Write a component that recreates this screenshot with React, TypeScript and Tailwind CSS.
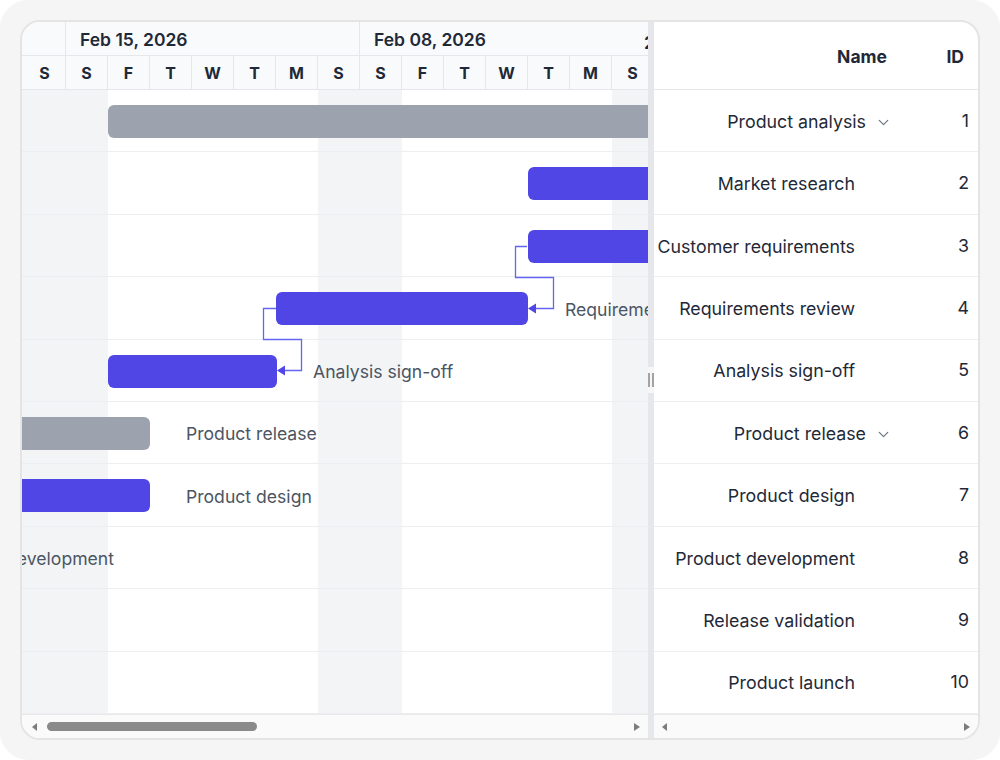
import React from 'react';
import { ChevronDown } from 'lucide-react';

const DAYS = ['S', 'S', 'F', 'T', 'W', 'T', 'M', 'S', 'S', 'F', 'T', 'W', 'T', 'M', 'S'];
const WEEKEND = [0, 1, 7, 8, 14];

const ROWS = [
  { id: 1, name: 'Product analysis', parent: true },
  { id: 2, name: 'Market research' },
  { id: 3, name: 'Customer requirements' },
  { id: 4, name: 'Requirements review' },
  { id: 5, name: 'Analysis sign-off' },
  { id: 6, name: 'Product release', parent: true },
  { id: 7, name: 'Product design' },
  { id: 8, name: 'Product development' },
  { id: 9, name: 'Release validation' },
  { id: 10, name: 'Product launch' },
];

type Bar = { left: number; width: number; summary?: boolean; label?: string; labelLeft?: number; labelRight?: number };

const BARS: (Bar | null)[] = [
  { left: 86, width: 600, summary: true },
  { left: 506, width: 200 },
  { left: 506, width: 200 },
  { left: 254, width: 252, label: 'Requirements review', labelLeft: 543 },
  { left: 86, width: 169, label: 'Analysis sign-off', labelLeft: 291 },
  { left: -30, width: 158, summary: true, label: 'Product release', labelLeft: 164 },
  { left: -30, width: 158, label: 'Product design', labelLeft: 164 },
  { left: 0, width: 0, label: 'Product development', labelRight: 534 },
  null,
  null,
];

function DayCols({ header }: { header?: boolean }) {
  return (
    <>
      {DAYS.map((d, i) => (
        <div
          key={i}
          className={
            (i === 0 ? 'w-[44px] ' : 'w-[42px] ') +
            'shrink-0 ' +
            (header
              ? 'flex items-center justify-center border-r border-[#e5e7eb] bg-[#f9fafb] text-[16px] font-bold text-[#1f2937]'
              : WEEKEND.includes(i)
              ? 'h-full bg-[#f3f4f6]'
              : 'h-full bg-white')
          }
        >
          {header ? <span className={i === 0 ? 'pl-[2px]' : ''}>{d}</span> : null}
        </div>
      ))}
    </>
  );
}

function ArrowLeft() {
  return (
    <svg width="6" height="8" viewBox="0 0 6 8">
      <path d="M5 0 L5 8 L0 4 Z" fill="#7c7c7c" />
    </svg>
  );
}
function ArrowRight() {
  return (
    <svg width="6" height="8" viewBox="0 0 6 8">
      <path d="M0 0 L0 8 L6 4 Z" fill="#7c7c7c" />
    </svg>
  );
}

export default function App() {
  return (
    <div className="w-[1000px] h-[760px] bg-white font-['Inter',sans-serif]">
      <div className="w-full h-full rounded-[28px] bg-[#f5f5f5] p-[20px]">
        <div className="w-[960px] h-[720px] rounded-[20px] border-2 border-[#e4e4e4] bg-white overflow-hidden flex">
          {/* Chart panel */}
          <div className="w-[626px] shrink-0 flex flex-col overflow-hidden">
            {/* header */}
            <div className="h-[68px] shrink-0 flex flex-col overflow-hidden relative">
              <div className="h-[34px] flex border-b border-[#e5e7eb] bg-[#f9fafb]">
                <div className="w-[44px] shrink-0 border-r border-[#e5e7eb]" />
                <div className="w-[294px] shrink-0 border-r border-[#e5e7eb] flex items-center pl-[14px] pt-[3px] text-[17.5px] font-semibold text-[#1f2937]">
                  Feb 15, 2026
                </div>
                <div className="w-[294px] shrink-0 border-r border-[#e5e7eb] flex items-center pl-[14px] pt-[3px] text-[17.5px] font-semibold text-[#1f2937]">
                  Feb 08, 2026
                </div>
              </div>
              <div className="h-[34px] flex border-b border-[#e5e7eb]">
                <DayCols header />
              </div>
              <span className="absolute left-[622px] top-[8px] text-[17.5px] font-semibold text-[#1f2937]">2</span>
            </div>
            {/* body */}
            <div className="relative h-[624px] shrink-0 overflow-hidden">
              <div className="absolute inset-0 flex">
                <DayCols />
              </div>
              <div className="relative flex flex-col">
                {BARS.map((b, i) => (
                  <div key={i} className="relative h-[62.4px] border-b border-[#eceef1] shrink-0">
                    {b && b.width > 0 && (
                      <div
                        className={
                          'absolute top-[15px] h-[33px] rounded-[6px] ' +
                          (b.summary ? 'bg-[#9ca3af]' : 'bg-[#4f46e5]')
                        }
                        style={{ left: b.left, width: b.width }}
                      />
                    )}
                    {b && b.label && (
                      <div
                        className="absolute top-[2px] h-full flex items-center whitespace-nowrap text-[17.6px] text-[#4b5563]"
                        style={b.labelRight !== undefined ? { right: b.labelRight } : { left: b.labelLeft }}
                      >
                        {b.label}
                      </div>
                    )}
                  </div>
                ))}
              </div>
              <svg className="absolute inset-0 pointer-events-none" width="626" height="624">
                <path
                  d="M505 156.5 H493.5 V187.5 H531.5 V218.5 H514"
                  fill="none"
                  stroke="#6366f1"
                  strokeWidth="1.3"
                />
                <path d="M506 218.5 L514 213.5 L514 223.5 Z" fill="#4f46e5" />
                <path
                  d="M254 218.5 H241.5 V249.5 H279.5 V280.5 H263"
                  fill="none"
                  stroke="#6366f1"
                  strokeWidth="1.3"
                />
                <path d="M255 280.5 L263 275.5 L263 285.5 Z" fill="#4f46e5" />
              </svg>
            </div>
            {/* scrollbar */}
            <div className="h-[24px] shrink-0 border-t border-[#e8e8e8] bg-[#fafafa] flex items-center pl-[10px] pr-[8px]">
              <ArrowLeft />
              <div className="ml-[9px] w-[210px] h-[9px] rounded-full bg-[#8a8a8a]" />
              <div className="flex-1" />
              <ArrowRight />
            </div>
          </div>

          {/* Splitter */}
          <div className="w-[6px] shrink-0 flex flex-col">
            <div className="flex-1 bg-[#e5e7eb]" />
            <div className="h-[26px] bg-[#f7f7f8] flex items-center justify-between">
              <div className="w-[2px] h-[14px] bg-[#a3a3a3]" />
              <div className="w-[2px] h-[14px] bg-[#a3a3a3]" />
            </div>
            <div className="flex-1 bg-[#e5e7eb]" />
          </div>

          {/* Grid panel */}
          <div className="flex-1 flex flex-col overflow-hidden text-[#1f2937]">
            <div className="h-[68px] shrink-0 border-b border-[#e5e7eb] flex items-center pt-[3px] text-[17.5px] font-bold">
              <div className="w-[246px] shrink-0 flex justify-end pr-[13px]">Name</div>
              <div className="flex-1 flex justify-end pr-[14px]">ID</div>
            </div>
            <div className="h-[624px] shrink-0 flex flex-col">
              {ROWS.map((r) => (
                <div key={r.id} className="h-[62.4px] shrink-0 border-b border-[#eceef1] flex items-center pt-[3px] text-[17.8px]">
                  <div
                    className={
                      'w-[246px] shrink-0 flex items-center justify-end whitespace-nowrap ' +
                      (r.parent ? 'pr-[8px]' : 'pr-[45px]')
                    }
                  >
                    <span>{r.name}</span>
                    {r.parent && <ChevronDown size={17} strokeWidth={1.7} className="ml-[9px] text-[#6b7280]" />}
                  </div>
                  <div className="flex-1 flex justify-end pr-[9px] -mt-[2px]">{r.id}</div>
                </div>
              ))}
            </div>
            <div className="h-[24px] shrink-0 border-t border-[#e8e8e8] bg-[#fafafa] flex items-center justify-between pl-[8px] pr-[8px]">
              <ArrowLeft />
              <ArrowRight />
            </div>
          </div>
        </div>
      </div>
    </div>
  );
}
